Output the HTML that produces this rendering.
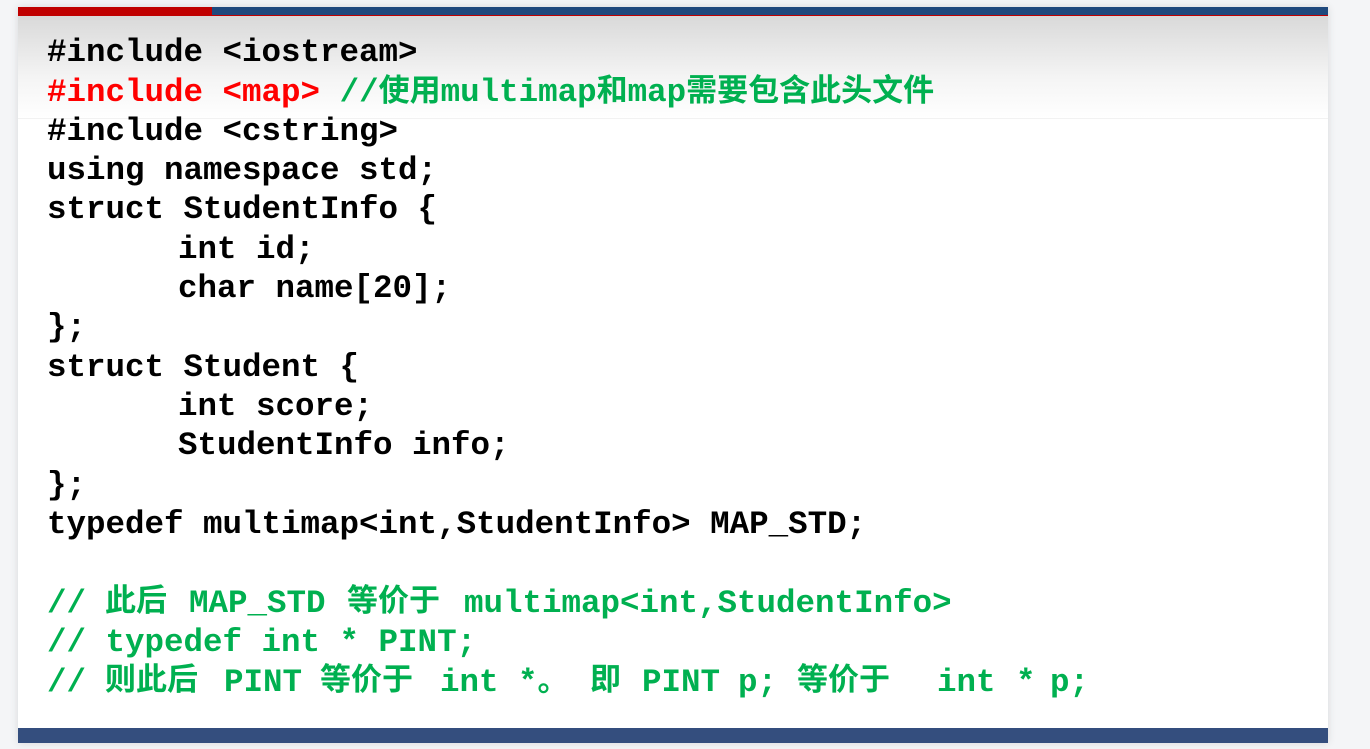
<!DOCTYPE html>
<html><head><meta charset="utf-8"><style>
html,body{margin:0;padding:0;}
body{width:1370px;height:749px;background:#f4f5f7;position:relative;overflow:hidden;}
.slide{position:absolute;left:18px;top:7px;width:1310px;height:736px;background:#fff;box-shadow:0 0 8px rgba(0,0,0,.12);}
.red{position:absolute;left:0;top:0;width:194px;height:9px;background:#c00000;}
.blue{position:absolute;left:194px;top:0;width:1116px;height:8px;background:#1f497d;border-bottom:1px solid #c00000;}
.grad{position:absolute;left:0;top:9px;width:1310px;height:102px;background:linear-gradient(#d9d9d9,#f4f4f4 60%,#fff);border-bottom:1px solid #f2f2f2;}
.bot{position:absolute;left:0;top:721px;width:1310px;height:15px;background:#344e7e;}
.l{position:absolute;left:47px;height:39px;font-family:"Liberation Mono","Noto Sans CJK SC",monospace;font-weight:bold;font-size:32.5px;line-height:39px;white-space:pre;color:#000;}
.r{color:#ff0000}.g{color:#00b050}
.c{font-family:"Noto Sans CJK SC","WenQuanYi Zen Hei",sans-serif;font-size:31px;font-weight:bold;line-height:0;position:relative;top:0px;}
.a{position:absolute;}
span.a.c{top:-6px;line-height:39px;}
</style></head><body>
<div class="slide"><div class="grad"></div><div class="red"></div><div class="blue"></div><div class="bot"></div></div>
<div class="l" style="top:33px">#include &lt;iostream&gt;</div>
<div class="l" style="top:73px"><span class="r">#include &lt;map&gt;</span> <span class="g">//<span class="c">使用</span>multimap<span class="c">和</span>map<span class="c">需要包含此头文件</span></span></div>
<div class="l" style="top:112px">#include &lt;cstring&gt;</div>
<div class="l" style="top:151px">using namespace std;</div>
<div class="l" style="top:190px">struct StudentInfo {</div>
<div class="l" style="top:230px;left:178px">int id;</div>
<div class="l" style="top:269px;left:178px">char name[20];</div>
<div class="l" style="top:308px">};</div>
<div class="l" style="top:348px">struct Student {</div>
<div class="l" style="top:387px;left:178px">int score;</div>
<div class="l" style="top:426px;left:178px">StudentInfo info;</div>
<div class="l" style="top:466px">};</div>
<div class="l" style="top:505px">typedef multimap&lt;int,StudentInfo&gt; MAP_STD;</div>
<div class="l g" style="top:584px;width:1000px">//<span class="a c" style="left:58px">此后</span><span class="a" style="left:142px">MAP_STD</span><span class="a c" style="left:300px">等价于</span><span class="a" style="left:417px">multimap&lt;int,StudentInfo&gt;</span></div>
<div class="l g" style="top:623px">// typedef int * PINT;</div>
<div class="l g" style="top:663px;width:1100px">//<span class="a c" style="left:58px">则此后</span><span class="a" style="left:177px">PINT</span><span class="a c" style="left:273px">等价于</span><span class="a" style="left:393px">int</span><span class="a" style="left:471px">*<span class="c">。</span></span><span class="a c" style="left:543px">即</span><span class="a" style="left:595px">PINT</span><span class="a" style="left:691px">p;</span><span class="a c" style="left:750px">等价于</span><span class="a" style="left:890px">int</span><span class="a" style="left:969px">*</span><span class="a" style="left:1003px">p;</span></div>
</body></html>
